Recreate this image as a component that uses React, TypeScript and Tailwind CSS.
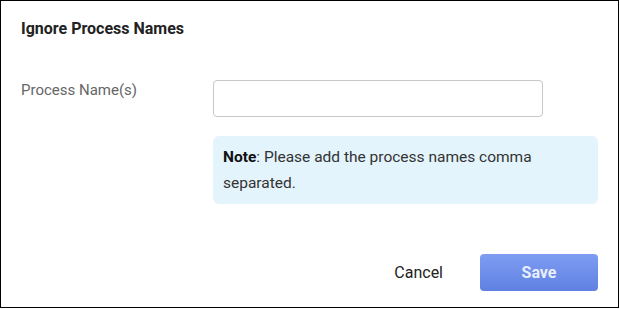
import React from 'react';

const App: React.FC = () => {
  return (
    <div className="w-[620px] h-[309px] bg-white" style={{ fontFamily: 'Roboto, "Liberation Sans", sans-serif' }}>
      <div className="w-[619px] h-[308px] border border-black flex flex-col">
        {/* Title */}
        <h2 className="pl-[20px] pt-[18px] text-[16px] leading-5 font-bold text-[#222]">Ignore Process Names</h2>

        {/* Field */}
        <div className="flex mt-[41px] pl-[20px]">
          <label className="w-[192px] text-[15px] leading-5 text-[#666]">Process Name(s)</label>
          <div className="flex flex-col">
            <input
              type="text"
              className="w-[330px] h-[37px] border border-[#c8c8c8] rounded-[4px] px-2 text-[14px] outline-none"
            />
            <div className="mt-[19px] w-[385px] h-[68px] rounded-[6px] bg-[#e4f4fc] pl-[10px] pr-3 pt-[8px] text-[15.5px] leading-[26px] text-[#333]">
              <span className="font-bold text-[#111]">Note</span>: Please add the process names comma separated.
            </div>
          </div>
        </div>

        {/* Actions */}
        <div className="mt-auto flex justify-end items-center pr-[20px] pb-[16px]">
          <button className="text-[16px] text-[#222] px-2 mr-[29px]">Cancel</button>
          <button className="w-[118px] h-[37px] rounded-[4px] bg-gradient-to-b from-[#7e9cf2] to-[#6081e2] text-[16px] font-bold text-[#e9eefc]">
            Save
          </button>
        </div>
      </div>
    </div>
  );
};

export default App;
